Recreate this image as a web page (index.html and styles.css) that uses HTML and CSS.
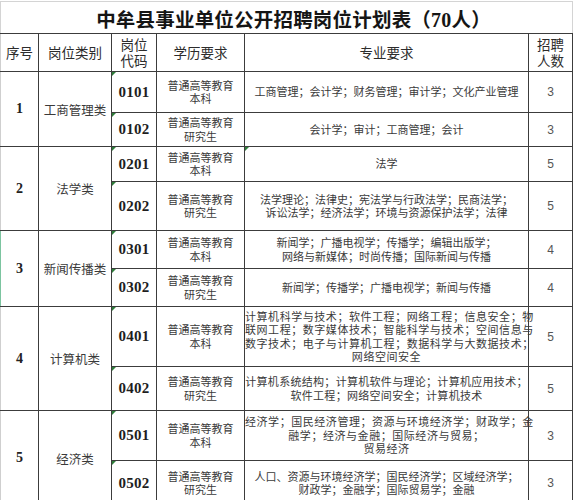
FILE: index.html
```html
<!DOCTYPE html>
<html lang="zh-CN">
<head>
<meta charset="utf-8">
<title>中牟县事业单位公开招聘岗位计划表</title>
<link rel="stylesheet" href="styles.css">
</head>
<body>
<div class="sheet">
<table class="plan">
  <colgroup>
    <col class="c-seq"><col class="c-cat"><col class="c-code"><col class="c-edu"><col class="c-major"><col class="c-num">
  </colgroup>
  <tr class="r-title">
    <td colspan="6" class="title">中牟县事业单位公开招聘岗位计划表（<span class="tnum">70</span>人）</td>
  </tr>
  <tr class="r-head">
    <th>序号</th><th>岗位类别</th><th class="two">岗位<br>代码</th><th>学历要求</th><th>专业要求</th><th class="two">招聘<br>人数</th>
  </tr>

  <tr class="h-0101">
    <td rowspan="2" class="seq">1</td>
    <td rowspan="2" class="cat">工商管理类</td>
    <td class="code mark">0101</td>
    <td class="edu">普通高等教育<br>本科</td>
    <td class="major">工商管理；会计学；财务管理；审计学；文化产业管理</td>
    <td class="cnt">3</td>
  </tr>
  <tr class="h-0102">
    <td class="code mark">0102</td>
    <td class="edu">普通高等教育<br>研究生</td>
    <td class="major">会计学；审计；工商管理；会计</td>
    <td class="cnt">3</td>
  </tr>

  <tr class="h-0201">
    <td rowspan="2" class="seq">2</td>
    <td rowspan="2" class="cat">法学类</td>
    <td class="code mark">0201</td>
    <td class="edu">普通高等教育<br>本科</td>
    <td class="major mark">法学</td>
    <td class="cnt">5</td>
  </tr>
  <tr class="h-0202">
    <td class="code mark">0202</td>
    <td class="edu">普通高等教育<br>研究生</td>
    <td class="major">法学理论；法律史；宪法学与行政法学；民商法学；<br>诉讼法学；经济法学；环境与资源保护法学；法律</td>
    <td class="cnt">5</td>
  </tr>

  <tr class="h-0301">
    <td rowspan="2" class="seq sel">3</td>
    <td rowspan="2" class="cat">新闻传播类</td>
    <td class="code mark">0301</td>
    <td class="edu">普通高等教育<br>本科</td>
    <td class="major">新闻学；广播电视学；传播学；编辑出版学；<br>网络与新媒体；时尚传播；国际新闻与传播</td>
    <td class="cnt">4</td>
  </tr>
  <tr class="h-0302">
    <td class="code mark">0302</td>
    <td class="edu">普通高等教育<br>研究生</td>
    <td class="major">新闻学；传播学；广播电视学；新闻与传播</td>
    <td class="cnt">4</td>
  </tr>

  <tr class="h-0401">
    <td rowspan="2" class="seq">4</td>
    <td rowspan="2" class="cat">计算机类</td>
    <td class="code mark">0401</td>
    <td class="edu">普通高等教育<br>本科</td>
    <td class="major wide">计算机科学与技术；软件工程；网络工程；信息安全；物<br>联网工程；数字媒体技术；智能科学与技术；空间信息与<br>数字技术；电子与计算机工程；数据科学与大数据技术；<br>网络空间安全</td>
    <td class="cnt">5</td>
  </tr>
  <tr class="h-0402">
    <td class="code mark">0402</td>
    <td class="edu">普通高等教育<br>研究生</td>
    <td class="major mid">计算机系统结构；计算机软件与理论；计算机应用技术；<br>软件工程；网络空间安全；计算机技术</td>
    <td class="cnt">5</td>
  </tr>

  <tr class="h-0501">
    <td rowspan="2" class="seq">5</td>
    <td rowspan="2" class="cat">经济类</td>
    <td class="code mark">0501</td>
    <td class="edu">普通高等教育<br>本科</td>
    <td class="major wide">经济学；国民经济管理；资源与环境经济学；财政学；金<br>融学；经济与金融；国际经济与贸易；<br>贸易经济</td>
    <td class="cnt">3</td>
  </tr>
  <tr class="h-0502">
    <td class="code mark">0502</td>
    <td class="edu">普通高等教育<br>研究生</td>
    <td class="major">人口、资源与环境经济学；国民经济学；区域经济学；<br>财政学；金融学；国际贸易学；金融</td>
    <td class="cnt">3</td>
  </tr>
</table>
</div>
</body>
</html>
```

FILE: styles.css
```css
html, body {
  margin: 0;
  padding: 0;
  background: #ffffff;
}

.sheet {
  width: 578px;
  height: 500px;
  overflow: hidden;
  padding-top: 1px;
  box-sizing: border-box;
}

.plan {
  border-collapse: collapse;
  table-layout: fixed;
  width: 573px;
  font-family: "Noto Sans CJK SC", "Noto Sans", sans-serif;
  color: #333333;
}

.c-seq { width: 38px; }
.c-cat { width: 73px; }
.c-code { width: 45px; }
.c-edu { width: 88px; }
.c-major { width: 284px; }
.c-num { width: 44px; }

.plan td, .plan th {
  border: 1px solid #3c3c3c;
  padding: 0;
  text-align: center;
  vertical-align: middle;
  font-weight: 400;
  position: relative;
}

.plan td:first-child, .plan th:first-child {
  border-left-color: #cfcfcf;
}

.r-title td.title {
  height: 30px;
  border-top: 1px solid #d4d4d4;
  border-left-color: #d4d4d4;
  border-right-color: #d4d4d4;
  font-size: 19.5px;
  font-weight: 700;
  color: #151515;
  letter-spacing: 0.2px;
  padding: 1px 0 0 14px;
}

.tnum {
  font-family: "Liberation Serif", serif;
  font-weight: 700;
  font-size: 20px;
}

.r-head th {
  height: 37px;
  font-size: 13.5px;
  line-height: 15.5px;
  color: #2c2c2c;
}

.seq {
  font-family: "Liberation Serif", serif;
  font-weight: 700 !important;
  font-size: 14px;
  color: #222222;
}

.seq.sel {
  border-left-color: #7cc4a0 !important;
}

.cat {
  font-size: 12.5px;
  color: #3a3a3a;
}

.code {
  font-family: "Liberation Serif", serif;
  font-weight: 700 !important;
  font-size: 15px;
  color: #1e1e1e;
  letter-spacing: 0.3px;
}

.edu {
  font-size: 11px;
  line-height: 13.5px;
  color: #3a3a3a;
}

.major {
  font-size: 11px;
  line-height: 13.5px;
  color: #3a3a3a;
  white-space: nowrap;
}

.major.wide {
  letter-spacing: 0.55px;
}

.major.mid {
  letter-spacing: 0.3px;
}

.cnt {
  font-family: "Liberation Sans", sans-serif;
  font-size: 12px;
  color: #555555;
}

.mark::before {
  content: "";
  position: absolute;
  left: 0;
  top: 0;
  width: 0;
  height: 0;
  border-top: 4px solid #2f7d3a;
  border-right: 4px solid transparent;
}

.h-0101 td { height: 40px; }
.h-0102 td { height: 33px; }
.h-0201 td { height: 34px; }
.h-0202 td { height: 48px; }
.h-0301 td { height: 37px; }
.h-0302 td { height: 37px; }
.h-0401 td { height: 59px; }
.h-0402 td { height: 43px; }
.h-0501 td { height: 49px; }
.h-0502 td { height: 44px; }
```
